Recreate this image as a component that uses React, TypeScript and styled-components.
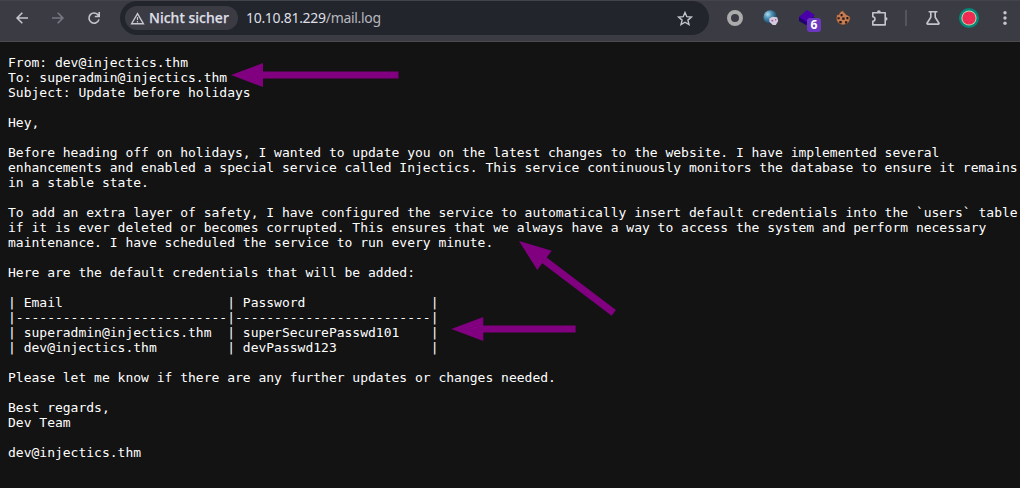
import React from "react";
import styled, { createGlobalStyle } from "styled-components";

const GlobalStyle = createGlobalStyle`
  html, body { margin: 0; padding: 0; background: #131313; }
`;

const Window = styled.div`
  position: relative;
  display: flex;
  flex-direction: column;
  width: 1020px;
  height: 488px;
  overflow: hidden;
  background: #131313;
`;

const Toolbar = styled.header`
  display: flex;
  align-items: flex-start;
  box-sizing: border-box;
  flex: none;
  height: 42px;
  padding: 0 0 0 4px;
  background: #3a3b43;
  border-top: 1px solid #42434b;
  border-bottom: 1px solid #4a4a4d;
  overflow: hidden;
`;

const ToolButton = styled.span<{ $width?: number }>`
  position: relative;
  display: flex;
  flex: none;
  align-items: center;
  justify-content: center;
  width: ${({ $width }) => $width ?? 36}px;
  height: 34px;

  svg { display: block; overflow: visible; }
`;

const AddressBar = styled.div`
  display: flex;
  flex: none;
  align-items: center;
  box-sizing: border-box;
  width: 589px;
  height: 34px;
  margin: 0 8px;
  padding: 0 6px 0 5px;
  border-radius: 17px;
  background: #23252d;
  font-family: "Noto Sans", "Open Sans", sans-serif;
`;

const SecurityChip = styled.span`
  display: flex;
  align-items: center;
  box-sizing: border-box;
  width: 113px;
  height: 24px;
  padding-left: 5px;
  gap: 4px;
  border-radius: 12px;
  background: #3a3b43;
  color: #dedfe4;
  font-size: 14px;
  font-weight: 500;
  line-height: 24px;
  letter-spacing: 0.03px;
  -webkit-text-stroke: 0.25px #dedfe4;
  white-space: nowrap;

  svg { flex: none; }
`;

const Url = styled.span`
  flex: 1;
  margin-left: 8px;
  color: #dedfe4;
  font-size: 14px;
  line-height: 24px;
  letter-spacing: -0.3px;
  white-space: nowrap;
`;

const UrlPath = styled.span`
  color: #b6b8be;
`;

const Separator = styled.span`
  flex: none;
  width: 2px;
  height: 16px;
  margin: 9px 8px;
  background: #53555f;
`;

const CountBadge = styled.span`
  position: absolute;
  left: 18px;
  top: 17px;
  width: 14px;
  height: 14px;
  border-radius: 3px;
  background: #6c38c0;
  color: #fff;
  font: 700 12px/14px "Noto Sans", sans-serif;
  text-align: center;
`;

const MailLog = styled.pre`
  margin: 13px 0 0 8px;
  color: #fff;
  font-family: "DejaVu Sans Mono", monospace;
  font-size: 13px;
  line-height: 15px;
`;

const Annotations = styled.svg`
  position: absolute;
  inset: 0;
  pointer-events: none;
`;

const ICON = "#c4c6ce";

const mail = `From: dev@injectics.thm
To: superadmin@injectics.thm
Subject: Update before holidays

Hey,

Before heading off on holidays, I wanted to update you on the latest changes to the website. I have implemented several
enhancements and enabled a special service called Injectics. This service continuously monitors the database to ensure it remains
in a stable state.

To add an extra layer of safety, I have configured the service to automatically insert default credentials into the \`users\` table
if it is ever deleted or becomes corrupted. This ensures that we always have a way to access the system and perform necessary
maintenance. I have scheduled the service to run every minute.

Here are the default credentials that will be added:

| Email                     | Password                |
|---------------------------|-------------------------|
| superadmin@injectics.thm  | superSecurePasswd101    |
| dev@injectics.thm         | devPasswd123            |

Please let me know if there are any further updates or changes needed.

Best regards,
Dev Team

dev@injectics.thm`;

function BackIcon({ color = ICON }: { color?: string }) {
  return (
    <svg width="12" height="12" viewBox="0 0 12 12" fill="none" stroke={color} strokeWidth="1.6">
      <path d="M12 6H1.2M6.3.8 1.1 6l5.2 5.2" />
    </svg>
  );
}

function ForwardIcon() {
  return (
    <svg width="12" height="12" viewBox="0 0 12 12" fill="none" stroke="#777982" strokeWidth="1.6">
      <path d="M0 6h10.8M5.7.8 10.9 6l-5.2 5.2" />
    </svg>
  );
}

function ReloadIcon() {
  return (
    <svg width="12" height="12" viewBox="0 0 12 12" fill="none" stroke={ICON} strokeWidth="1.6">
      <path d="M11 7.4A5.1 5.1 0 1 1 10.3 3.2L11.2 4.4M11.2 0v4.5H6.8" />
    </svg>
  );
}

function WarningIcon() {
  return (
    <svg width="15" height="13" viewBox="0 0 15 13" fill="none" stroke="#c8c9cd" strokeWidth="1.4">
      <path d="M7.5 1.6 13.4 11.7H1.6Z" />
      <path d="M7.5 5v3M7.5 9v1.4" strokeWidth="1.2" />
    </svg>
  );
}

function StarIcon() {
  return (
    <svg width="16" height="15" viewBox="0 0 16 15" fill="none" stroke={ICON} strokeWidth="1.4">
      <path d="m8 1.5 1.8 4.2 4.6.4-3.5 3 1.1 4.5L8 11.2l-4 2.4 1.1-4.5-3.5-3 4.6-.4Z" />
    </svg>
  );
}

function GlobeIcon() {
  return (
    <svg width="16" height="16" viewBox="0 0 16 16">
      <defs>
        <radialGradient id="globe" cx=".32" cy=".3" r=".75">
          <stop offset="0" stopColor="#b4dbea" />
          <stop offset=".4" stopColor="#4c90b5" />
          <stop offset="1" stopColor="#123a57" />
        </radialGradient>
      </defs>
      <circle cx="7.2" cy="7" r="6.8" fill="url(#globe)" />
      <path d="M6.3 8.5 9.5 6.8l4.7.4 1 3.8-2.4 4H9.8l-3.5-3.2Z" fill="#d8c9dc" />
      <path d="m8 10 2-.2.4 1.6H8.8ZM12 9h1.2v1.6H12Z" fill="#9d68aa" />
    </svg>
  );
}

function LayersIcon() {
  return (
    <svg width="16" height="16" viewBox="0 0 16 16">
      <path d="M0 7 8 3.8 16 8v3L7 15 0 11Z" fill="#23006f" />
      <path d="M0 7 8 0l8 5-8 7Z" fill="#4900aa" />
    </svg>
  );
}

function CookieIcon() {
  return (
    <svg width="16" height="16" viewBox="0 0 16 16">
      <path
        d="M8.6.6c-.2 1.8.8 2.6 2 2.4.1 1.7 1.2 2.4 2.4 1.9.2.9 1 1.4 2 1.3A7 7 0 1 1 1.7 5.4C2.4 4 3 4.8 4 4.6 4.2 2.6 5.8.9 8.6.6Z"
        fill="#c77b50"
        stroke="#48352f"
        strokeWidth=".7"
      />
      <g fill="#211b1e">
        <path d="M5.6 4h2v2.2h-2ZM2.5 7.2h2.2v2H2.5ZM7.2 7.6h2.4v2.2H7.2ZM11.4 7h2v2.2h-2ZM4.3 11h2.4v2.2H4.3ZM10 11.2h2.3v2.2H10Z" />
      </g>
    </svg>
  );
}

function PuzzleIcon() {
  return (
    <svg width="17" height="17" viewBox="0 0 17 17" fill="none" stroke={ICON} strokeWidth="1.6" strokeLinejoin="round">
      <path d="M1.8 2.7H14.2V14.9H1.8V11.2c2.9-.3 2.9-4.2 0-4.5Z" />
      <path d="M6 2.2a1.9 1.9 0 0 1 3.8 0ZM14.6 6.9a1.9 1.9 0 0 1 0 3.8Z" fill={ICON} stroke="none" />
    </svg>
  );
}

function FlaskIcon() {
  return (
    <svg width="14" height="14" viewBox="0 0 14 14" fill="none" stroke={ICON} strokeWidth="1.6" strokeLinejoin="round">
      <path d="M2.6.8h8.8M4.8.8v5.5L1 12.2q-.2.9.7.9h10.6q.9 0 .7-.9L9.2 6.3V.8" />
    </svg>
  );
}

function ProfileIcon() {
  return (
    <svg width="20" height="20" viewBox="0 0 20 20">
      <circle cx="10" cy="10" r="10" fill="#05877a" />
      <circle cx="10" cy="10" r="7.6" fill="#b9dcae" />
      <circle cx="10" cy="10" r="6.6" fill="#f22b55" />
      <g fill="#b5213f">
        <circle cx="8" cy="6" r=".5" />
        <circle cx="12" cy="6" r=".5" />
        <circle cx="6" cy="10" r=".5" />
        <circle cx="14" cy="10" r=".5" />
        <circle cx="8" cy="14" r=".5" />
        <circle cx="12" cy="14" r=".5" />
      </g>
    </svg>
  );
}

function Arrow({ x, y, length, angle = 0 }: { x: number; y: number; length: number; angle?: number }) {
  return (
    <path
      transform={`translate(${x} ${y}) rotate(${angle})`}
      d={`M0 0 32-12v8.4H${length}v7.2H32V12Z`}
      fill="#800080"
    />
  );
}

export default function App() {
  return (
    <Window>
      <GlobalStyle />
      <Toolbar>
        <ToolButton><BackIcon /></ToolButton>
        <ToolButton><ForwardIcon /></ToolButton>
        <ToolButton><ReloadIcon /></ToolButton>
        <AddressBar>
          <SecurityChip>
            <WarningIcon />
            Nicht sicher
          </SecurityChip>
          <Url>10.10.81.229<UrlPath>/mail.log</UrlPath></Url>
          <ToolButton><StarIcon /></ToolButton>
        </AddressBar>
        <ToolButton>
          <svg width="16" height="16" viewBox="0 0 16 16">
            <circle cx="8" cy="8" r="6" fill="none" stroke="#ababab" strokeWidth="4" />
          </svg>
        </ToolButton>
        <ToolButton><GlobeIcon /></ToolButton>
        <ToolButton>
          <LayersIcon />
          <CountBadge>6</CountBadge>
        </ToolButton>
        <ToolButton><CookieIcon /></ToolButton>
        <ToolButton><PuzzleIcon /></ToolButton>
        <Separator />
        <ToolButton><FlaskIcon /></ToolButton>
        <ToolButton><ProfileIcon /></ToolButton>
        <ToolButton $width={33}>
          <svg width="4" height="14" viewBox="0 0 4 14" fill={ICON}>
            <circle cx="3" cy="1.8" r="1.7" />
            <circle cx="3" cy="7" r="1.7" />
            <circle cx="3" cy="12.2" r="1.7" />
          </svg>
        </ToolButton>
      </Toolbar>
      <MailLog>{mail}</MailLog>
      <Annotations width="1020" height="488" viewBox="0 0 1020 488">
        <Arrow x={231} y={75} length={167.5} />
        <Arrow x={519} y={241} length={119} angle={37.2} />
        <Arrow x={451.3} y={329} length={124.3} />
      </Annotations>
    </Window>
  );
}
